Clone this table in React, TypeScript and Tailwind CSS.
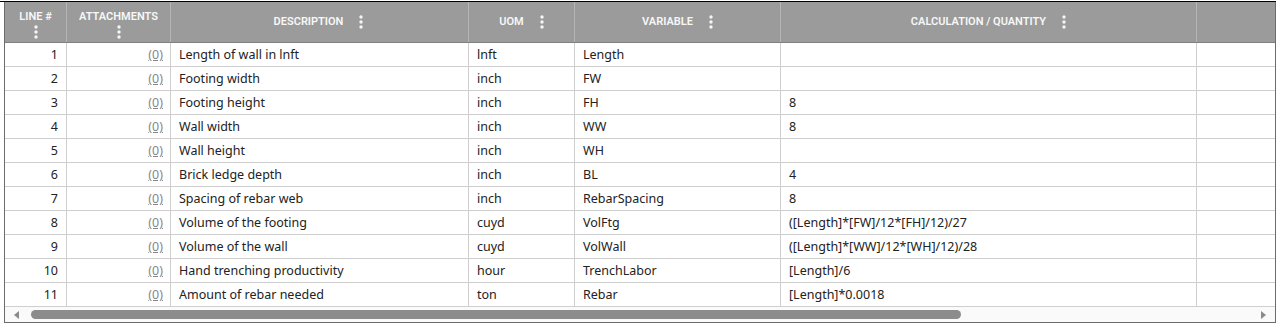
import React from "react";

const rows = [
  ["1", "Length of wall in lnft", "lnft", "Length", ""],
  ["2", "Footing width", "inch", "FW", ""],
  ["3", "Footing height", "inch", "FH", "8"],
  ["4", "Wall width", "inch", "WW", "8"],
  ["5", "Wall height", "inch", "WH", ""],
  ["6", "Brick ledge depth", "inch", "BL", "4"],
  ["7", "Spacing of rebar web", "inch", "RebarSpacing", "8"],
  ["8", "Volume of the footing", "cuyd", "VolFtg", "([Length]*[FW]/12*[FH]/12)/27"],
  ["9", "Volume of the wall", "cuyd", "VolWall", "([Length]*[WW]/12*[WH]/12)/28"],
  ["10", "Hand trenching productivity", "hour", "TrenchLabor", "[Length]/6"],
  ["11", "Amount of rebar needed", "ton", "Rebar", "[Length]*0.0018"],
];

function Kebab() {
  return (
    <svg width="4" height="14" viewBox="0 0 4 14" className="shrink-0">
      <circle cx="2" cy="2" r="1.7" fill="#f5f5f5" />
      <circle cx="2" cy="7" r="1.7" fill="#f5f5f5" />
      <circle cx="2" cy="12" r="1.7" fill="#f5f5f5" />
    </svg>
  );
}

const grid = "grid grid-cols-[62px_104px_298px_106px_206px_416px_1fr]";

export default function App() {
  return (
    <div className="w-[1279px] h-[329px] bg-white pt-px">
      <div className="h-px bg-black w-[1276px]" />
      <div className="ml-[4px] w-[1272px] border-l border-r border-b border-[#6b6b6b] flex flex-col">
        <div
          className={`${grid} h-[41px] bg-[#9b9b9b] border-b border-[#808080] text-[#f7f7f7] text-[11px] font-semibold`}
          style={{ fontFamily: "Roboto, 'Liberation Sans', sans-serif" }}
        >
          <div className="border-r border-[#b5b5b5] flex flex-col items-center pt-[8px] gap-[1px]">
            <span className="leading-[14px]">LINE #</span>
            <Kebab />
          </div>
          <div className="border-r border-[#b5b5b5] flex flex-col items-center pt-[8px] gap-[1px]">
            <span className="leading-[14px]">ATTACHMENTS</span>
            <Kebab />
          </div>
          <div className="border-r border-[#b5b5b5] flex items-center justify-center gap-[16px] pr-[2px]">
            <span>DESCRIPTION</span>
            <Kebab />
          </div>
          <div className="border-r border-[#b5b5b5] flex items-center justify-center gap-[16px]">
            <span>UOM</span>
            <Kebab />
          </div>
          <div className="border-r border-[#b5b5b5] flex items-center justify-center gap-[16px]">
            <span>VARIABLE</span>
            <Kebab />
          </div>
          <div className="border-r border-[#b5b5b5] flex items-center justify-center gap-[16px]">
            <span>CALCULATION / QUANTITY</span>
            <Kebab />
          </div>
          <div />
        </div>
        {rows.map((r) => (
          <div
            key={r[0]}
            className={`${grid} h-[24px] border-b border-[#cfcfcf] text-[12.5px] text-[#222]`}
            style={{ fontFamily: "'Noto Sans', 'Open Sans', sans-serif" }}
          >
            <div className="border-r border-[#cfcfcf] flex items-center justify-end pr-[8px] pt-[2px]">{r[0]}</div>
            <div className="border-r border-[#cfcfcf] flex items-center justify-end pr-[7px] pt-[2px]">
              <span className="text-[#888] underline">(0)</span>
            </div>
            <div className="border-r border-[#cfcfcf] flex items-center pl-[8px] pt-[2px]">{r[1]}</div>
            <div className="border-r border-[#cfcfcf] flex items-center pl-[8px] pt-[2px]">{r[2]}</div>
            <div className="border-r border-[#cfcfcf] flex items-center pl-[8px] pt-[2px]">{r[3]}</div>
            <div className="border-r border-[#cfcfcf] flex items-center pl-[8px] pt-[2px]">{r[4]}</div>
            <div />
          </div>
        ))}
        <div className="h-[15px] bg-[#fafafa] flex items-center px-[9px] gap-[12px]">
          <svg width="5" height="8" viewBox="0 0 5 8" className="shrink-0">
            <polygon points="5,0 0,4 5,8" fill="#8a8a8a" />
          </svg>
          <div className="w-[930px] h-[9px] rounded-full bg-[#8c8c8c]" />
          <div className="flex-1" />
          <svg width="5" height="8" viewBox="0 0 5 8" className="shrink-0">
            <polygon points="0,0 5,4 0,8" fill="#8a8a8a" />
          </svg>
        </div>
      </div>
    </div>
  );
}
